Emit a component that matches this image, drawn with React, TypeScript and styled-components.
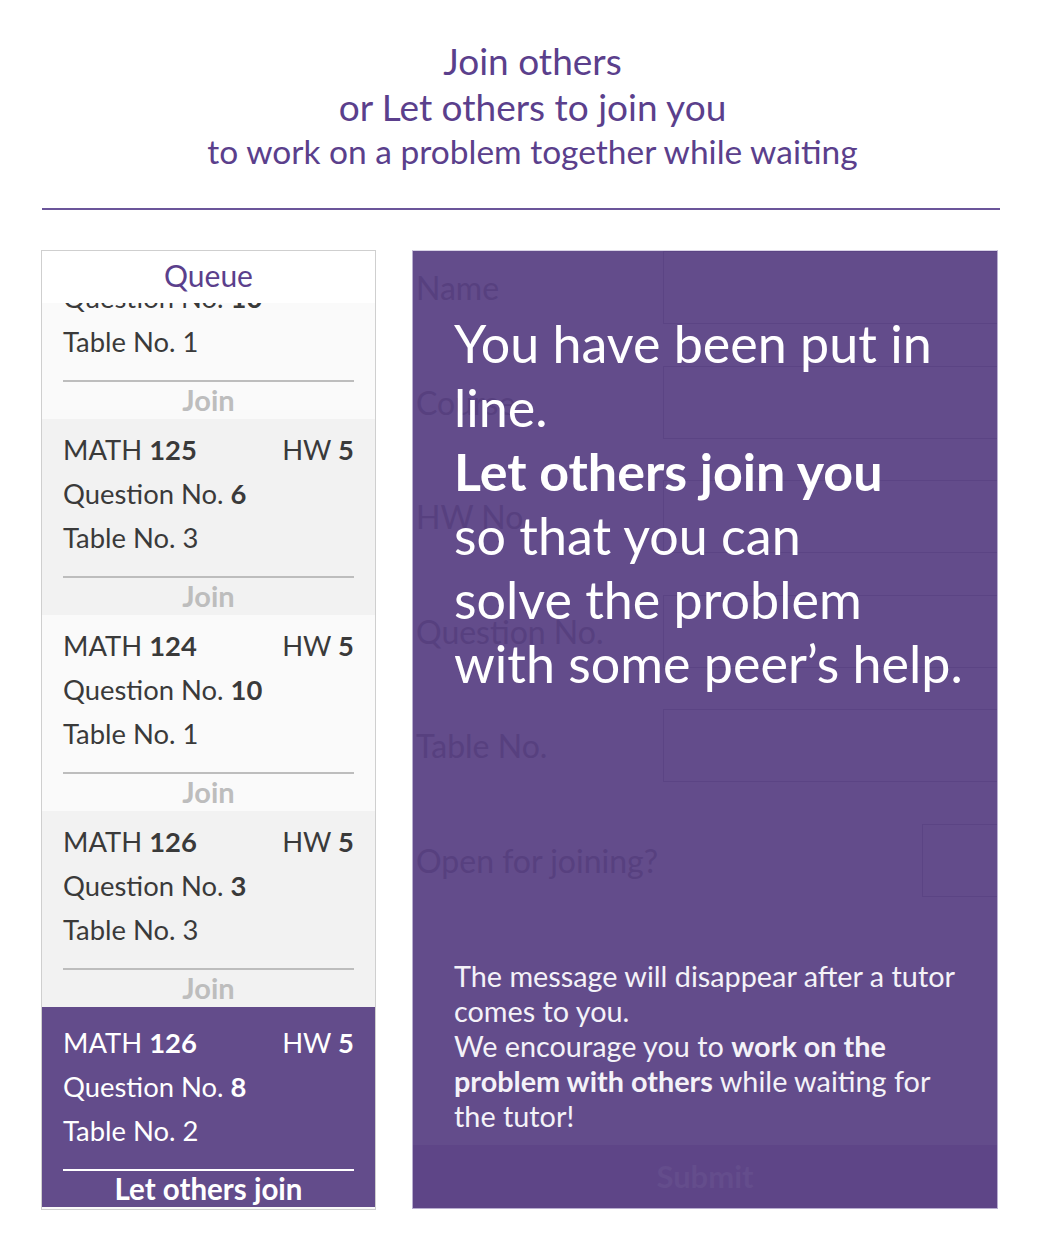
import React from "react";
import styled, { createGlobalStyle } from "styled-components";

const FONT = `"Lato", "Open Sans", sans-serif`;
const PURPLE = "#634c8b";

const Global = createGlobalStyle`
  html, body { margin: 0; padding: 0; background: #fff; }
  body { font-family: ${FONT}; }
  * { box-sizing: border-box; }
`;

const Page = styled.div`
  width: 1042px;
  padding-top: 38px;
`;

const Header = styled.header`
  text-align: center;
  color: #5b3f8c;
  padding: 0 0 36px 23px;
  border-bottom: 2px solid #6b559a;
  margin: 0 42px 0 42px;
`;

const HeadLine = styled.div<{ $size: number; $lh: number }>`
  font-size: ${(p) => p.$size}px;
  line-height: ${(p) => p.$lh}px;
`;

const Columns = styled.main`
  display: flex;
  gap: 36px;
  padding: 40px 0 0 41px;
  align-items: flex-start;
`;

const QueuePanel = styled.section`
  width: 335px;
  height: 960px;
  border: 1px solid #cfcfcf;
  display: flex;
  flex-direction: column;
  overflow: hidden;
`;

const QueueTitle = styled.h2`
  margin: 0;
  height: 52px;
  flex: none;
  background: #fff;
  color: #5b3f8c;
  font-weight: 400;
  font-size: 30px;
  line-height: 48px;
  text-align: center;
`;

const QueueList = styled.div`
  flex: 1;
  overflow: hidden;
  background: #fafafa;
`;

const QueueScroll = styled.div`
  margin-top: -80px;
`;

const Item = styled.article<{ $variant: "light" | "grey" | "mine" }>`
  padding: 0 21px;
  padding-top: ${(p) => (p.$variant === "mine" ? 14 : 9)}px;
  height: ${(p) => (p.$variant === "mine" ? 200 : 196)}px;
  background: ${(p) =>
    p.$variant === "mine" ? PURPLE : p.$variant === "grey" ? "#f2f2f2" : "#fafafa"};
  color: ${(p) => (p.$variant === "mine" ? "#fff" : "#3a3a3a")};
  font-size: 27.4px;
`;

const Row = styled.div`
  display: flex;
  justify-content: space-between;
  line-height: 44px;
  height: 44px;
  white-space: nowrap;
`;

const Divider = styled.hr<{ $light?: boolean }>`
  margin: 16px 0 0 0;
  border: none;
  height: 2px;
  background: ${(p) => (p.$light ? "#fff" : "#bdbdbd")};
`;

const ItemAction = styled.div<{ $mine?: boolean }>`
  text-align: center;
  font-weight: 700;
  line-height: 36px;
  font-size: ${(p) => (p.$mine ? 29.5 : 29)}px;
  color: ${(p) => (p.$mine ? "#fff" : "#bdbdbd")};
`;

const FormPanel = styled.section`
  position: relative;
  width: 586px;
  height: 959px;
  background: ${PURPLE};
  border: 1px solid #b9aed0;
  border-top-color: #d8d2e6;
  display: flex;
  flex-direction: column;
`;

const FormGrid = styled.div`
  display: grid;
  grid-template-columns: 250px 1fr;
  grid-auto-rows: 73px;
  row-gap: 41.6px;
  flex: 1;
  align-content: start;
`;

const Label = styled.label`
  color: #57407f;
  font-size: 32px;
  line-height: 73px;
  padding-left: 3px;
  white-space: nowrap;
`;

const FieldBox = styled.div`
  border: 1px solid #5b4484;
  border-right: none;
`;

const CheckCell = styled.div`
  display: flex;
  justify-content: flex-end;
`;

const CheckBox = styled.div`
  width: 75px;
  height: 73px;
  border: 1px solid #5b4484;
  border-right: none;
`;

const SubmitBar = styled.div`
  height: 63px;
  flex: none;
  background: #5e4587;
  color: #644d8c;
  font-weight: 700;
  font-size: 31px;
  text-align: center;
  line-height: 63px;
`;

const Overlay = styled.div`
  position: absolute;
  inset: 0;
  padding: 60px 30px 0 41px;
  color: #fff;
  display: flex;
  flex-direction: column;
`;

const BigMessage = styled.p`
  margin: 0;
  font-size: 52px;
  line-height: 64px;
  font-weight: 400;
`;

const SmallMessage = styled.p`
  margin: 0;
  margin-top: auto;
  margin-bottom: 74px;
  font-size: 28.8px;
  line-height: 35px;
  color: #f4f2f8;
`;

type Q = { course: number; hw: number; q: number; table: number; variant: "light" | "grey" | "mine" };

const items: Q[] = [
  { course: 124, hw: 5, q: 10, table: 1, variant: "light" },
  { course: 125, hw: 5, q: 6, table: 3, variant: "grey" },
  { course: 124, hw: 5, q: 10, table: 1, variant: "light" },
  { course: 126, hw: 5, q: 3, table: 3, variant: "grey" },
  { course: 126, hw: 5, q: 8, table: 2, variant: "mine" },
];

export default function App() {
  return (
    <>
      <Global />
      <Page>
        <Header>
          <HeadLine $size={37} $lh={46}>Join others</HeadLine>
          <HeadLine $size={37} $lh={46}>or Let others to join you</HeadLine>
          <HeadLine $size={33.5} $lh={42}>to work on a problem together while waiting</HeadLine>
        </Header>
        <Columns>
          <QueuePanel>
            <QueueTitle>Queue</QueueTitle>
            <QueueList>
              <QueueScroll>
                {items.map((it, i) => (
                  <Item key={i} $variant={it.variant}>
                    <Row>
                      <span>
                        MATH <b>{it.course}</b>
                      </span>
                      <span>
                        HW <b>{it.hw}</b>
                      </span>
                    </Row>
                    <Row>
                      <span>
                        Question No. <b>{it.q}</b>
                      </span>
                    </Row>
                    <Row>
                      <span>Table No. {it.table}</span>
                    </Row>
                    <Divider $light={it.variant === "mine"} />
                    <ItemAction $mine={it.variant === "mine"}>
                      {it.variant === "mine" ? "Let others join" : "Join"}
                    </ItemAction>
                  </Item>
                ))}
              </QueueScroll>
            </QueueList>
          </QueuePanel>
          <FormPanel>
            <FormGrid>
              <Label>Name</Label>
              <FieldBox />
              <Label>Course</Label>
              <FieldBox />
              <Label>HW No.</Label>
              <FieldBox />
              <Label>Question No.</Label>
              <FieldBox />
              <Label>Table No.</Label>
              <FieldBox />
              <Label>Open for joining?</Label>
              <CheckCell>
                <CheckBox />
              </CheckCell>
            </FormGrid>
            <SubmitBar>Submit</SubmitBar>
            <Overlay>
              <BigMessage>
                You have been put in line.
                <br />
                <b>Let others join you</b>
                <br />
                so that you can
                <br />
                solve the problem
                <br />
                with some peer’s help.
              </BigMessage>
              <SmallMessage>
                The message will disappear after a tutor comes to you.
                <br />
                We encourage you to <b>work on the problem with others</b> while waiting for the tutor!
              </SmallMessage>
            </Overlay>
          </FormPanel>
        </Columns>
      </Page>
    </>
  );
}
